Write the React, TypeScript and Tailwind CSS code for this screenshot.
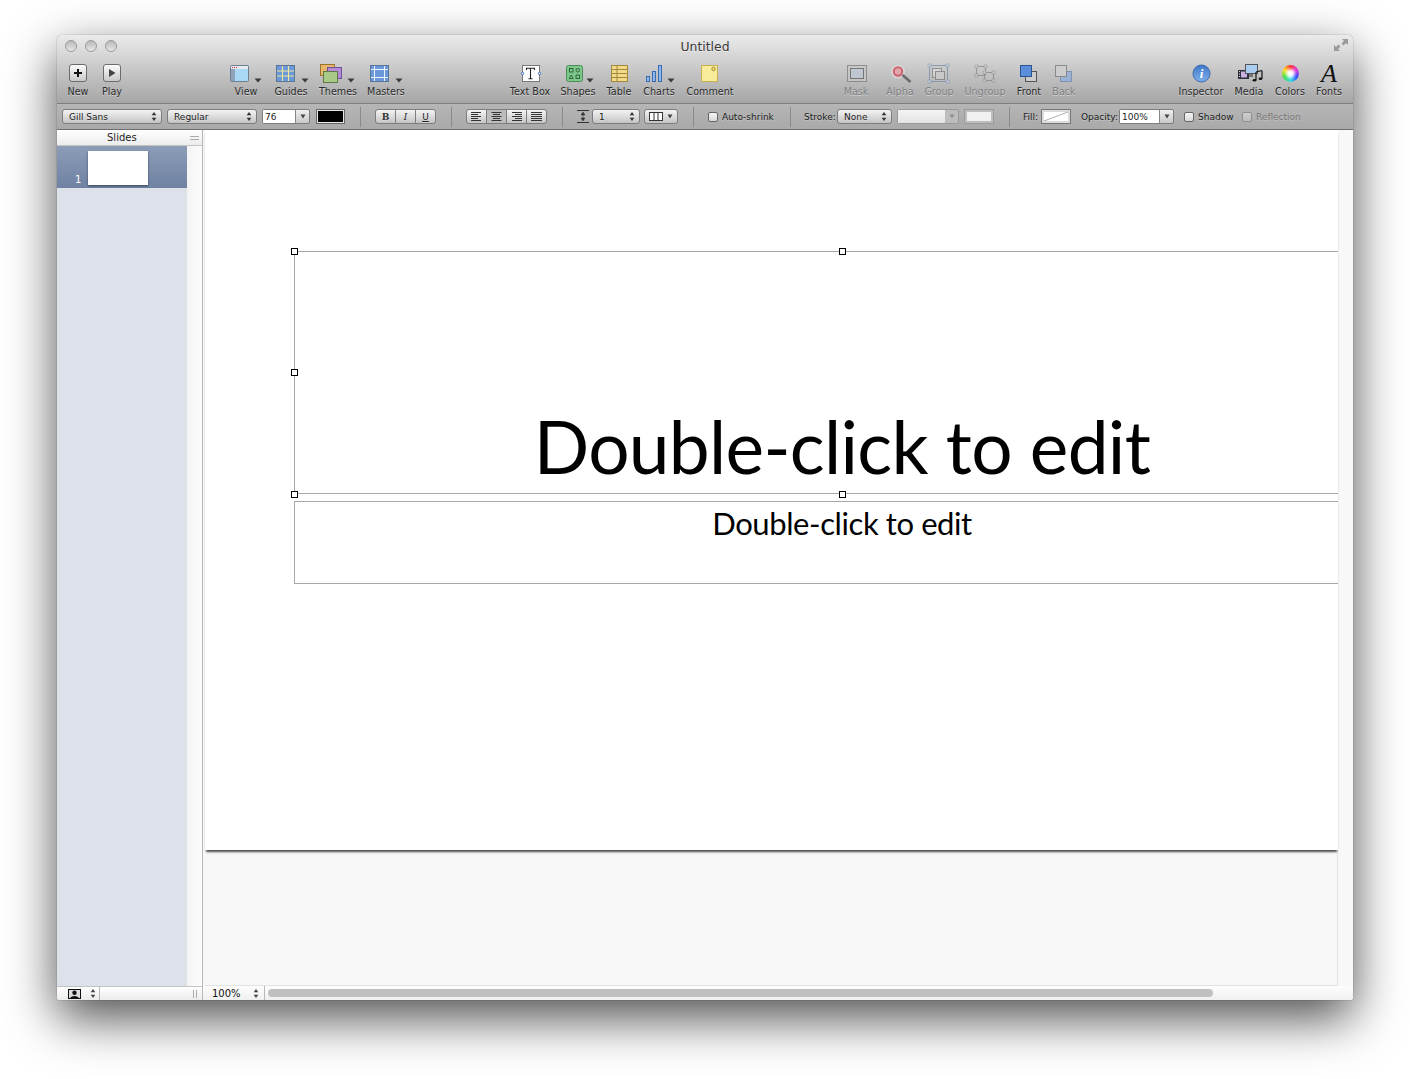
import React from "react";

const Arrow = ({ x }: { x: number }) => <path d={`M${x - 3.5} 15.5h7l-3.5 4z`} fill="#3a3a3a" />;

const icons: Record<string, React.ReactNode> = {
  New: (
    <g>
      <rect x="7.5" y="1.5" width="17" height="17" rx="2.5" fill="url(#btn)" stroke="#6b6b6b" />
      <path d="M16 6v8M12 10h8" stroke="#111" strokeWidth="2" />
    </g>
  ),
  Play: (
    <g>
      <rect x="7.5" y="1.5" width="17" height="17" rx="2.5" fill="url(#btn)" stroke="#6b6b6b" />
      <path d="M13 6l6.5 4-6.5 4z" fill="#444" />
    </g>
  ),
  View: (
    <g>
      <rect x="0.5" y="2.5" width="18" height="16" rx="1" fill="#8ea2b8" stroke="#6f7f92" />
      <rect x="5" y="6" width="13" height="12" fill="#a8d8f4" />
      <rect x="1" y="3" width="17" height="3" fill="#e6e9ee" />
      <path d="M2 4.5h1M4 4.5h1M6 4.5h1" stroke="#c33" />
      <Arrow x={28} />
    </g>
  ),
  Guides: (
    <g>
      <rect x="1.5" y="2.5" width="18" height="16" fill="#6a98d8" stroke="#5a7596" />
      <path d="M7.5 3v15M13.5 3v15" stroke="#f3e89a" strokeWidth="1.1" />
      <path d="M2 8h17M2 13h17" stroke="#f3e89a" strokeWidth="1.1" />
      <Arrow x={30} />
    </g>
  ),
  Themes: (
    <g>
      <rect x="-1.5" y="1.5" width="14" height="11" fill="#e8b76a" stroke="#9a7232" />
      <rect x="5.5" y="4.5" width="14" height="11" fill="#b78ad8" stroke="#71509b" />
      <rect x="1.5" y="8.5" width="14" height="11" fill="#a9ca87" stroke="#5d7c47" />
      <Arrow x={29} />
    </g>
  ),
  Masters: (
    <g>
      <rect x="0.5" y="2.5" width="18" height="16" fill="#6a98d8" stroke="#5a7596" />
      <path d="M4.5 3v15M14.5 3v15M1 6.5h17M1 14.5h17" stroke="#eef4fb" strokeWidth="1" />
      <Arrow x={29} />
    </g>
  ),
  "Text Box": (
    <g>
      <rect x="8.5" y="2.5" width="17" height="16" fill="#fff" stroke="#777" />
      <path d="M12.5 7V5.2h8V7M16.5 5.2v10.6M14.5 15.8h4" stroke="#222" strokeWidth="1.1" fill="none" />
      <circle cx="8.5" cy="10.5" r="1.2" fill="#fff" stroke="#3d6fb5" />
      <circle cx="25.5" cy="10.5" r="1.2" fill="#fff" stroke="#3d6fb5" />
    </g>
  ),
  Shapes: (
    <g>
      <rect x="4.5" y="2.5" width="16" height="16" rx="2" fill="#7cc88a" stroke="#4d8d5a" />
      <rect x="7.5" y="5.5" width="3.5" height="3.5" fill="none" stroke="#2a5a38" strokeWidth=".9" />
      <rect x="14" y="5.5" width="3.5" height="3.5" rx="1.7" fill="none" stroke="#2a5a38" strokeWidth=".9" />
      <path d="M9.2 12l2 3.5H7.2zM14 12h3.5v3.5H14z" fill="none" stroke="#2a5a38" strokeWidth=".9" />
      <Arrow x={28} />
    </g>
  ),
  Table: (
    <g>
      <rect x="8.5" y="2.5" width="16" height="16" fill="#f2d98a" stroke="#a28a3c" />
      <path d="M14 3v15M9 6.5h15M9 10.5h15M9 14.5h15" stroke="#a28a3c" />
    </g>
  ),
  Charts: (
    <g>
      <rect x="3.5" y="13.5" width="3" height="5" fill="#8cb8ee" stroke="#3a6cb4" />
      <rect x="9.5" y="8.5" width="3" height="10" fill="#8cb8ee" stroke="#3a6cb4" />
      <rect x="15.5" y="2.5" width="3" height="16" fill="#8cb8ee" stroke="#3a6cb4" />
      <Arrow x={28} />
    </g>
  ),
  Comment: (
    <g>
      <rect x="7.5" y="2.5" width="16" height="16" fill="#f8ec9a" stroke="#c4b050" />
      <circle cx="19.5" cy="6" r="1.8" fill="#f0d060" stroke="#8a7a30" strokeWidth=".7" />
    </g>
  ),
  Mask: (
    <g opacity=".7">
      <rect x="7.5" y="2.5" width="19" height="16" fill="#c8c8c8" stroke="#777" />
      <rect x="10.5" y="5.5" width="13" height="10" fill="#bdcad8" stroke="#555" />
    </g>
  ),
  Alpha: (
    <g opacity=".8">
      <circle cx="14" cy="8.5" r="7.5" fill="#dcd8d8" stroke="#bbb" strokeDasharray="1.5 1" />
      <circle cx="14" cy="8.5" r="4.2" fill="#e8a0a8" stroke="#d04858" strokeWidth="2" />
      <path d="M18.5 12l8 7" stroke="#555" strokeWidth="2.6" />
    </g>
  ),
  Group: (
    <g opacity=".7">
      <rect x="6.5" y="2.5" width="18" height="16" fill="none" stroke="#6f88a8" />
      <rect x="9.5" y="5.5" width="9" height="9" fill="#ddd" stroke="#777" />
      <rect x="12.5" y="8.5" width="9" height="8" fill="#ccc" stroke="#777" />
      <path d="M5 1h3v3H5zM23 1h3v3h-3zM5 17h3v3H5zM23 17h3v3h-3z" fill="#c9d4e2" stroke="#6f88a8" strokeWidth=".6" />
    </g>
  ),
  Ungroup: (
    <g opacity=".6">
      <rect x="7.5" y="3.5" width="9" height="9" fill="none" stroke="#777" />
      <rect x="15.5" y="9.5" width="9" height="8" fill="none" stroke="#777" />
      <path d="M6 2h3v3H6zM15 2h3v3h-3zM6 11h3v3H6zM14 8h3v3h-3zM23 8h3v3h-3zM14 16h3v3h-3zM23 16h3v3h-3z" fill="#ccc" stroke="#777" strokeWidth=".6" />
    </g>
  ),
  Front: (
    <g>
      <rect x="12.5" y="8.5" width="11" height="10" fill="#ccc" stroke="#555" />
      <rect x="7.5" y="2.5" width="11" height="11" fill="#5b8fdc" stroke="#2c558f" />
    </g>
  ),
  Back: (
    <g opacity=".75">
      <rect x="12.5" y="8.5" width="11" height="10" fill="#8eaede" stroke="#6a86ac" />
      <rect x="7.5" y="2.5" width="11" height="11" fill="#d0d0d0" stroke="#777" />
    </g>
  ),
  Inspector: (
    <g>
      <circle cx="16.5" cy="10.5" r="8.5" fill="url(#info)" stroke="#3a69ad" />
      <text x="16.5" y="15" textAnchor="middle" fontSize="13" fontStyle="italic" fontWeight="700" fontFamily="Liberation Serif, serif" fill="#fff">i</text>
    </g>
  ),
  Media: (
    <g>
      <rect x="5" y="7" width="11" height="9" fill="#2a2f3a" />
      <rect x="8" y="8.5" width="6" height="6" fill="#c9b0e0" />
      <path d="M6 8.5h1M6 11h1M6 13.5h1" stroke="#ddd" />
      <rect x="12.5" y="1.5" width="12" height="9" fill="#a8cdf0" stroke="#555" />
      <rect x="16" y="11" width="4" height="3" fill="#777" />
      <path d="M23 9v8M29 7.5v8M23 9l6-1.5" stroke="#111" strokeWidth="1.2" fill="none" />
      <ellipse cx="21.5" cy="17.3" rx="1.9" ry="1.3" fill="#111" />
      <ellipse cx="27.5" cy="15.8" rx="1.9" ry="1.3" fill="#111" />
    </g>
  ),
};

type Tool = { label: string; box: string; muted?: boolean };

const tools: Tool[] = [
  { label: "New", box: "w-[34px] ml-[4px]" },
  { label: "Play", box: "w-[34px]" },
  { label: "View", box: "w-[44px] ml-[95px]" },
  { label: "Guides", box: "w-[46px]" },
  { label: "Themes", box: "w-[48px]" },
  { label: "Masters", box: "w-[48px]" },
  { label: "Text Box", box: "w-[48px] ml-[96px]" },
  { label: "Shapes", box: "w-[48px]" },
  { label: "Table", box: "w-[34px]" },
  { label: "Charts", box: "w-[46px]" },
  { label: "Comment", box: "w-[56px]" },
  { label: "Mask", box: "w-[40px] ml-[98px]", muted: true },
  { label: "Alpha", box: "w-[48px]", muted: true },
  { label: "Group", box: "w-[30px]", muted: true },
  { label: "Ungroup", box: "w-[62px]", muted: true },
  { label: "Front", box: "w-[26px]" },
  { label: "Back", box: "w-[44px]", muted: true },
  { label: "Inspector", box: "w-[54px] ml-[88px]" },
  { label: "Media", box: "w-[42px]" },
  { label: "Colors", box: "w-[40px]" },
  { label: "Fonts", box: "w-[38px]" },
];

const ToolIcon = ({ label }: { label: string }) => {
  if (label === "Colors")
    return (
      <div className="h-[22px] flex items-center justify-center">
        <div className="w-[17px] h-[17px] mt-[-1px] rounded-full bg-[conic-gradient(#ff3030,#e030e0,#3050ff,#30e0e0,#40e040,#ffe020,#ff3030)] flex items-center justify-center">
          <div className="w-[9px] h-[9px] rounded-full bg-white blur-[1.5px]" />
        </div>
      </div>
    );
  if (label === "Fonts")
    return (
      <div className="h-[22px] flex items-center justify-center font-['Liberation_Serif',serif] italic text-[26px] leading-[22px] text-[#111]">
        A
      </div>
    );
  return (
    <svg width="32" height="22" viewBox="0 0 32 22" className="overflow-visible mx-auto block">
      {icons[label]}
    </svg>
  );
};

const ToolItem = ({ t }: { t: Tool }) => (
  <div className={`${t.box} shrink-0 flex flex-col items-center`}>
    <div className="h-[22px] w-[32px]">
      <ToolIcon label={t.label} />
    </div>
    <div
      className={`mt-[1px] whitespace-nowrap text-[9.6px] leading-[12px] [text-shadow:0_1px_0_rgba(255,255,255,0.45)] ${
        t.muted ? "text-[#808080]" : "text-[#2a2a2a]"
      }`}
    >
      {t.label}
    </div>
  </div>
);

const Updown = ({ dark = "#333" }: { dark?: string }) => (
  <svg width="6" height="11" viewBox="0 0 6 11" className="shrink-0">
    <path d="M3 1l2.3 3.2H.7zM3 10L.7 6.8h4.6z" fill={dark} />
  </svg>
);

const Down = () => (
  <svg width="6" height="5" viewBox="0 0 6 5" className="shrink-0">
    <path d="M.5.5h5L3 4.5z" fill="#444" />
  </svg>
);

const Select = ({ text, box }: { text: string; box: string }) => (
  <div
    className={`${box} shrink-0 h-[15px] rounded-[3px] border border-[#7d7d7d] bg-linear-to-b from-[#f4f4f4] to-[#c4c4c4] flex items-center justify-between pl-[6px] pr-[4px] text-[9px] leading-[13px] text-[#1c1c1c]`}
  >
    <span className="pt-[1px]">{text}</span>
    <Updown />
  </div>
);

const Combo = ({ text, box }: { text: string; box: string }) => (
  <div className={`${box} shrink-0 h-[15px] rounded-[2px] border border-[#7d7d7d] bg-linear-to-b from-[#f0f0f0] to-[#c8c8c8] flex items-stretch text-[9px] text-[#1c1c1c]`}>
    <div className="flex-1 bg-white pl-[2px] leading-[14px] border-r border-[#888]">{text}</div>
    <div className="w-[13px] flex items-center justify-center">
      <Down />
    </div>
  </div>
);

const Sep = ({ ml }: { ml: string }) => <div className={`${ml} shrink-0 w-px h-[20px] bg-[#8a8a8a]`} />;

const Check = ({ label, box, muted }: { label: string; box: string; muted?: boolean }) => (
  <div className={`${box} shrink-0 flex items-center gap-[4px] text-[9px] leading-[13px] whitespace-nowrap ${muted ? "text-[#777]" : "text-[#1c1c1c]"}`}>
    <div className={`w-[10px] h-[10px] rounded-[2px] border bg-linear-to-b ${muted ? "border-[#909090] from-[#cfcfcf] to-[#bcbcbc]" : "border-[#666] from-[#f5f5f5] to-[#d8d8d8]"}`} />
    <span className="pt-[2px]">{label}</span>
  </div>
);

const Seg = ({ box, children }: { box: string; children: React.ReactNode }) => (
  <div className={`${box} shrink-0 h-[15px] rounded-[3px] border border-[#7d7d7d] bg-linear-to-b from-[#f4f4f4] to-[#c4c4c4] flex divide-x divide-[#7d7d7d]`}>
    {children}
  </div>
);

const AlignIcon = ({ kind }: { kind: "l" | "c" | "r" | "j" }) => {
  const rows = [10, 7, 10, 7, 10];
  return (
    <svg width="11" height="9" viewBox="0 0 11 9">
      {rows.map((w0, i) => {
        const w = kind === "j" ? 11 : w0;
        const x = kind === "c" ? (11 - w) / 2 : kind === "r" ? 11 - w : 0;
        return <rect key={i} x={x} y={i * 2} width={w} height="1" fill="#333" />;
      })}
    </svg>
  );
};

const Handle = ({ cls }: { cls: string }) => (
  <div className={`absolute w-[7px] h-[7px] bg-white border border-black ${cls}`} />
);

export default function App() {
  return (
    <div className="w-[1410px] h-[1079px] bg-white pt-[35px] pl-[57px] overflow-hidden font-['DejaVu_Sans',sans-serif]">
      <svg width="0" height="0" className="absolute">
        <defs>
          <linearGradient id="btn" x1="0" y1="0" x2="0" y2="1">
            <stop offset="0" stopColor="#fdfdfd" />
            <stop offset="1" stopColor="#c8c8c8" />
          </linearGradient>
          <linearGradient id="info" x1="0" y1="0" x2="0" y2="1">
            <stop offset="0" stopColor="#3f78c8" />
            <stop offset="1" stopColor="#7fb0ec" />
          </linearGradient>
        </defs>
      </svg>
      <div className="w-[1296px] h-[965px] flex flex-col rounded-t-[5px] rounded-b-[3px] overflow-visible shadow-[0_18px_50px_rgba(0,0,0,0.7),0_0_1px_rgba(0,0,0,0.7)]">
        {/* Title bar + toolbar */}
        <div className="h-[69px] shrink-0 flex flex-col rounded-t-[5px] border-b border-[#7f7f7f] bg-linear-to-b from-[#ebebeb] to-[#a6a6a6]">
          <div className="h-[28px] shrink-0 flex items-start pt-[5px] px-[8px]">
            <div className="w-[52px] flex gap-[8px]">
              {[0, 1, 2].map((i) => (
                <div key={i} className="w-[12px] h-[12px] rounded-full border border-[#9a9a9a] bg-linear-to-b from-[#b8b8b8] to-[#e8e8e8]" />
              ))}
            </div>
            <div className="flex-1 text-center text-[12.4px] leading-[13px] text-[#3a3a3a] [text-shadow:0_1px_0_rgba(255,255,255,0.5)]">
              Untitled
            </div>
            <svg width="16" height="16" viewBox="0 0 16 16" className="mr-[-4px] mt-[-3px] ml-[40px]">
              <path d="M9 2h6v6l-2-2-2.5 2.5-2-2L11 4zM7 14H1V8l2 2 2.5-2.5 2 2L5 12z" fill="#9a9a9a" />
            </svg>
          </div>
          <div className="flex items-start">
            {tools.map((t) => (
              <ToolItem key={t.label} t={t} />
            ))}
          </div>
        </div>

        {/* Format bar */}
        <div className="h-[26px] shrink-0 flex items-center pl-[5px] border-b border-[#6f6f6f] bg-linear-to-b from-[#b6b6b6] to-[#a9a9a9] [text-shadow:0_1px_0_rgba(255,255,255,0.25)]">
          <Select text="Gill Sans" box="w-[100px]" />
          <Select text="Regular" box="w-[90px] ml-[5px]" />
          <Combo text="76" box="w-[48px] ml-[5px]" />
          <div className="shrink-0 ml-[6px] w-[29px] h-[15px] border border-[#666] bg-[#e8e8e8] p-[1px]">
            <div className="w-full h-full bg-black" />
          </div>
          <Sep ml="ml-[15px]" />
          <Seg box="w-[61px] ml-[14px]">
            <div className="flex-1 text-center text-[9px] leading-[14px] font-['DejaVu_Serif',serif] font-bold text-[#333]">B</div>
            <div className="flex-1 text-center text-[9px] leading-[14px] font-['DejaVu_Serif',serif] italic text-[#222]">I</div>
            <div className="flex-1 text-center text-[9px] leading-[14px] underline text-[#222]">U</div>
          </Seg>
          <Sep ml="ml-[15px]" />
          <Seg box="w-[81px] ml-[14px]">
            <div className="flex-1 flex items-center justify-center"><AlignIcon kind="l" /></div>
            <div className="flex-1 flex items-center justify-center bg-[#bdbdbd]"><AlignIcon kind="c" /></div>
            <div className="flex-1 flex items-center justify-center"><AlignIcon kind="r" /></div>
            <div className="flex-1 flex items-center justify-center"><AlignIcon kind="j" /></div>
          </Seg>
          <Sep ml="ml-[15px]" />
          <svg width="12" height="13" viewBox="0 0 12 13" className="shrink-0 ml-[14px]">
            <path d="M0 .5h12M0 12.5h12" stroke="#333" />
            <path d="M6 2l2 3H4zM6 11L4 8h4zM6 4.5v4" stroke="#333" strokeWidth=".5" fill="#333" />
          </svg>
          <Select text="1" box="w-[48px] ml-[3px]" />
          <div className="shrink-0 ml-[4px] w-[34px] h-[15px] rounded-[3px] border border-[#7d7d7d] bg-linear-to-b from-[#f4f4f4] to-[#c4c4c4] flex items-center justify-between px-[4px]">
            <svg width="14" height="9" viewBox="0 0 14 9">
              <rect x=".5" y=".5" width="13" height="8" fill="#fff" stroke="#333" />
              <path d="M5 0v9M9 0v9" stroke="#333" />
            </svg>
            <Down />
          </div>
          <Sep ml="ml-[15px]" />
          <Check label="Auto-shrink" box="w-[68px] ml-[14px]" />
          <Sep ml="ml-[14px]" />
          <div className="shrink-0 ml-[13px] w-[33px] text-[9px] leading-[13px] pt-[2px] text-[#1c1c1c]">Stroke:</div>
          <Select text="None" box="w-[55px]" />
          <div className="shrink-0 ml-[5px] w-[62px] h-[15px] rounded-[2px] border border-[#999] bg-[#bdbdbd] flex items-stretch">
            <div className="flex-1 bg-linear-to-b from-[#f4f4f4] to-[#e4e4e4]" />
            <div className="w-[13px] flex items-center justify-center opacity-40"><Down /></div>
          </div>
          <div className="shrink-0 ml-[5px] w-[30px] h-[15px] border border-[#999] bg-[#bdbdbd] p-[2px]">
            <div className="w-full h-full bg-[#f0f0f0]" />
          </div>
          <Sep ml="ml-[15px]" />
          <div className="shrink-0 ml-[13px] w-[18px] text-[9px] leading-[13px] pt-[2px] text-[#1c1c1c]">Fill:</div>
          <div className="shrink-0 w-[30px] h-[15px] border border-[#777] bg-[#dcdcdc] p-[2px]">
            <svg width="24" height="9" viewBox="0 0 24 9" className="block bg-white">
              <path d="M0 9L24 0" stroke="#999" strokeWidth=".8" />
            </svg>
          </div>
          <div className="shrink-0 ml-[10px] w-[38px] text-[9px] leading-[13px] pt-[2px] text-[#1c1c1c]">Opacity:</div>
          <Combo text="100%" box="w-[55px]" />
          <Check label="Shadow" box="w-[58px] ml-[10px]" />
          <Check label="Reflection" box="w-[60px]" muted />
        </div>

        {/* Body */}
        <div className="flex-1 min-h-0 flex bg-[#f8f8f8] rounded-b-[3px] overflow-hidden">
          {/* Sidebar */}
          <div className="w-[146px] shrink-0 flex flex-col border-r border-[#b8b8b8]">
            <div className="h-[16px] shrink-0 flex items-center pl-[50px] pr-[3px] justify-between bg-linear-to-b from-[#ffffff] to-[#ececec] border-b border-[#c4c4c4]">
              <span className="text-[10px] leading-[12px] text-[#222]">Slides</span>
              <div className="w-[9px] h-[4px] border-y border-[#aaa]" />
            </div>
            <div className="flex-1 min-h-0 flex">
              <div className="w-[130px] bg-[#dde2ea]">
                <div className="h-[42px] bg-linear-to-b from-[#8d9db8] to-[#6f82a2] pl-[18px] flex items-end gap-[7px]">
                  <span className="text-white text-[10px] leading-[12px] mb-[2px]">1</span>
                  <div className="w-[60px] h-[34px] mb-[3px] bg-white shadow-[0_1px_2px_rgba(0,0,0,0.5)]" />
                </div>
              </div>
              <div className="flex-1 bg-linear-to-r from-[#f4f4f4] to-[#fcfcfc]" />
            </div>
            <div className="h-[14px] shrink-0 flex items-stretch bg-linear-to-b from-[#ffffff] to-[#ececec] border-t border-[#c4c4c4]">
              <div className="w-[43px] border-r border-[#b8b8b8] flex items-center pl-[11px] gap-[9px]">
                <svg width="13" height="10" viewBox="0 0 13 10">
                  <rect x=".5" y=".5" width="12" height="9" fill="#ddd" stroke="#111" />
                  <circle cx="6.5" cy="3.8" r="2.2" fill="#111" />
                  <path d="M2 9.5c.5-3.5 8.5-3.5 9 0z" fill="#111" />
                </svg>
                <Updown dark="#444" />
              </div>
              <div className="flex-1 flex items-center justify-end pr-[5px]">
                <div className="w-[4px] h-[8px] border-x border-[#aaa]" />
              </div>
            </div>
          </div>

          {/* Canvas */}
          <div className="flex-1 min-w-0 flex flex-col">
            <div className="flex-1 min-h-0 flex pl-[2px] pr-[15px]">
              <div className="flex-1 min-w-0 flex flex-col">
                <div className="relative z-10 h-[720px] shrink-0 bg-white overflow-hidden pl-[89px] pt-[121px] shadow-[0_3px_2px_-1px_rgba(0,0,0,0.7)]">
                  <div className="w-[1096px] h-[243px] border border-[#a8a8a8] flex items-end justify-center">
                    <div className="font-['Lato',sans-serif] text-[73px] leading-[90px] tracking-[-0.7px] text-black mb-[2px] whitespace-nowrap">
                      Double-click to edit
                    </div>
                  </div>
                  <div className="mt-[7px] w-[1096px] h-[83px] border border-[#a8a8a8] text-center font-['Lato',sans-serif] text-[31px] leading-[43px] tracking-[-0.4px] text-black">
                    Double-click to edit
                  </div>
                  <Handle cls="left-[86px] top-[118px]" />
                  <Handle cls="left-[634px] top-[118px]" />
                  <Handle cls="left-[86px] top-[239px]" />
                  <Handle cls="left-[86px] top-[361px]" />
                  <Handle cls="left-[634px] top-[361px]" />
                </div>
                <div className="flex-1 border-r border-b border-[#e2e2e2]" />
              </div>
            </div>
            <div className="h-[14px] shrink-0 flex items-stretch bg-linear-to-b from-[#fdfdfd] to-[#f0f0f0]">
              <div className="w-[62px] shrink-0 border-r border-[#b8b8b8] flex items-center justify-between pl-[9px] pr-[5px] text-[10px] text-[#111]">
                100%
                <Updown dark="#444" />
              </div>
              <div className="flex-1 flex items-center pl-[3px]">
                <div className="w-[945px] h-[8px] rounded-full bg-[#c0c0c0]" />
              </div>
            </div>
          </div>
        </div>
      </div>
    </div>
  );
}
